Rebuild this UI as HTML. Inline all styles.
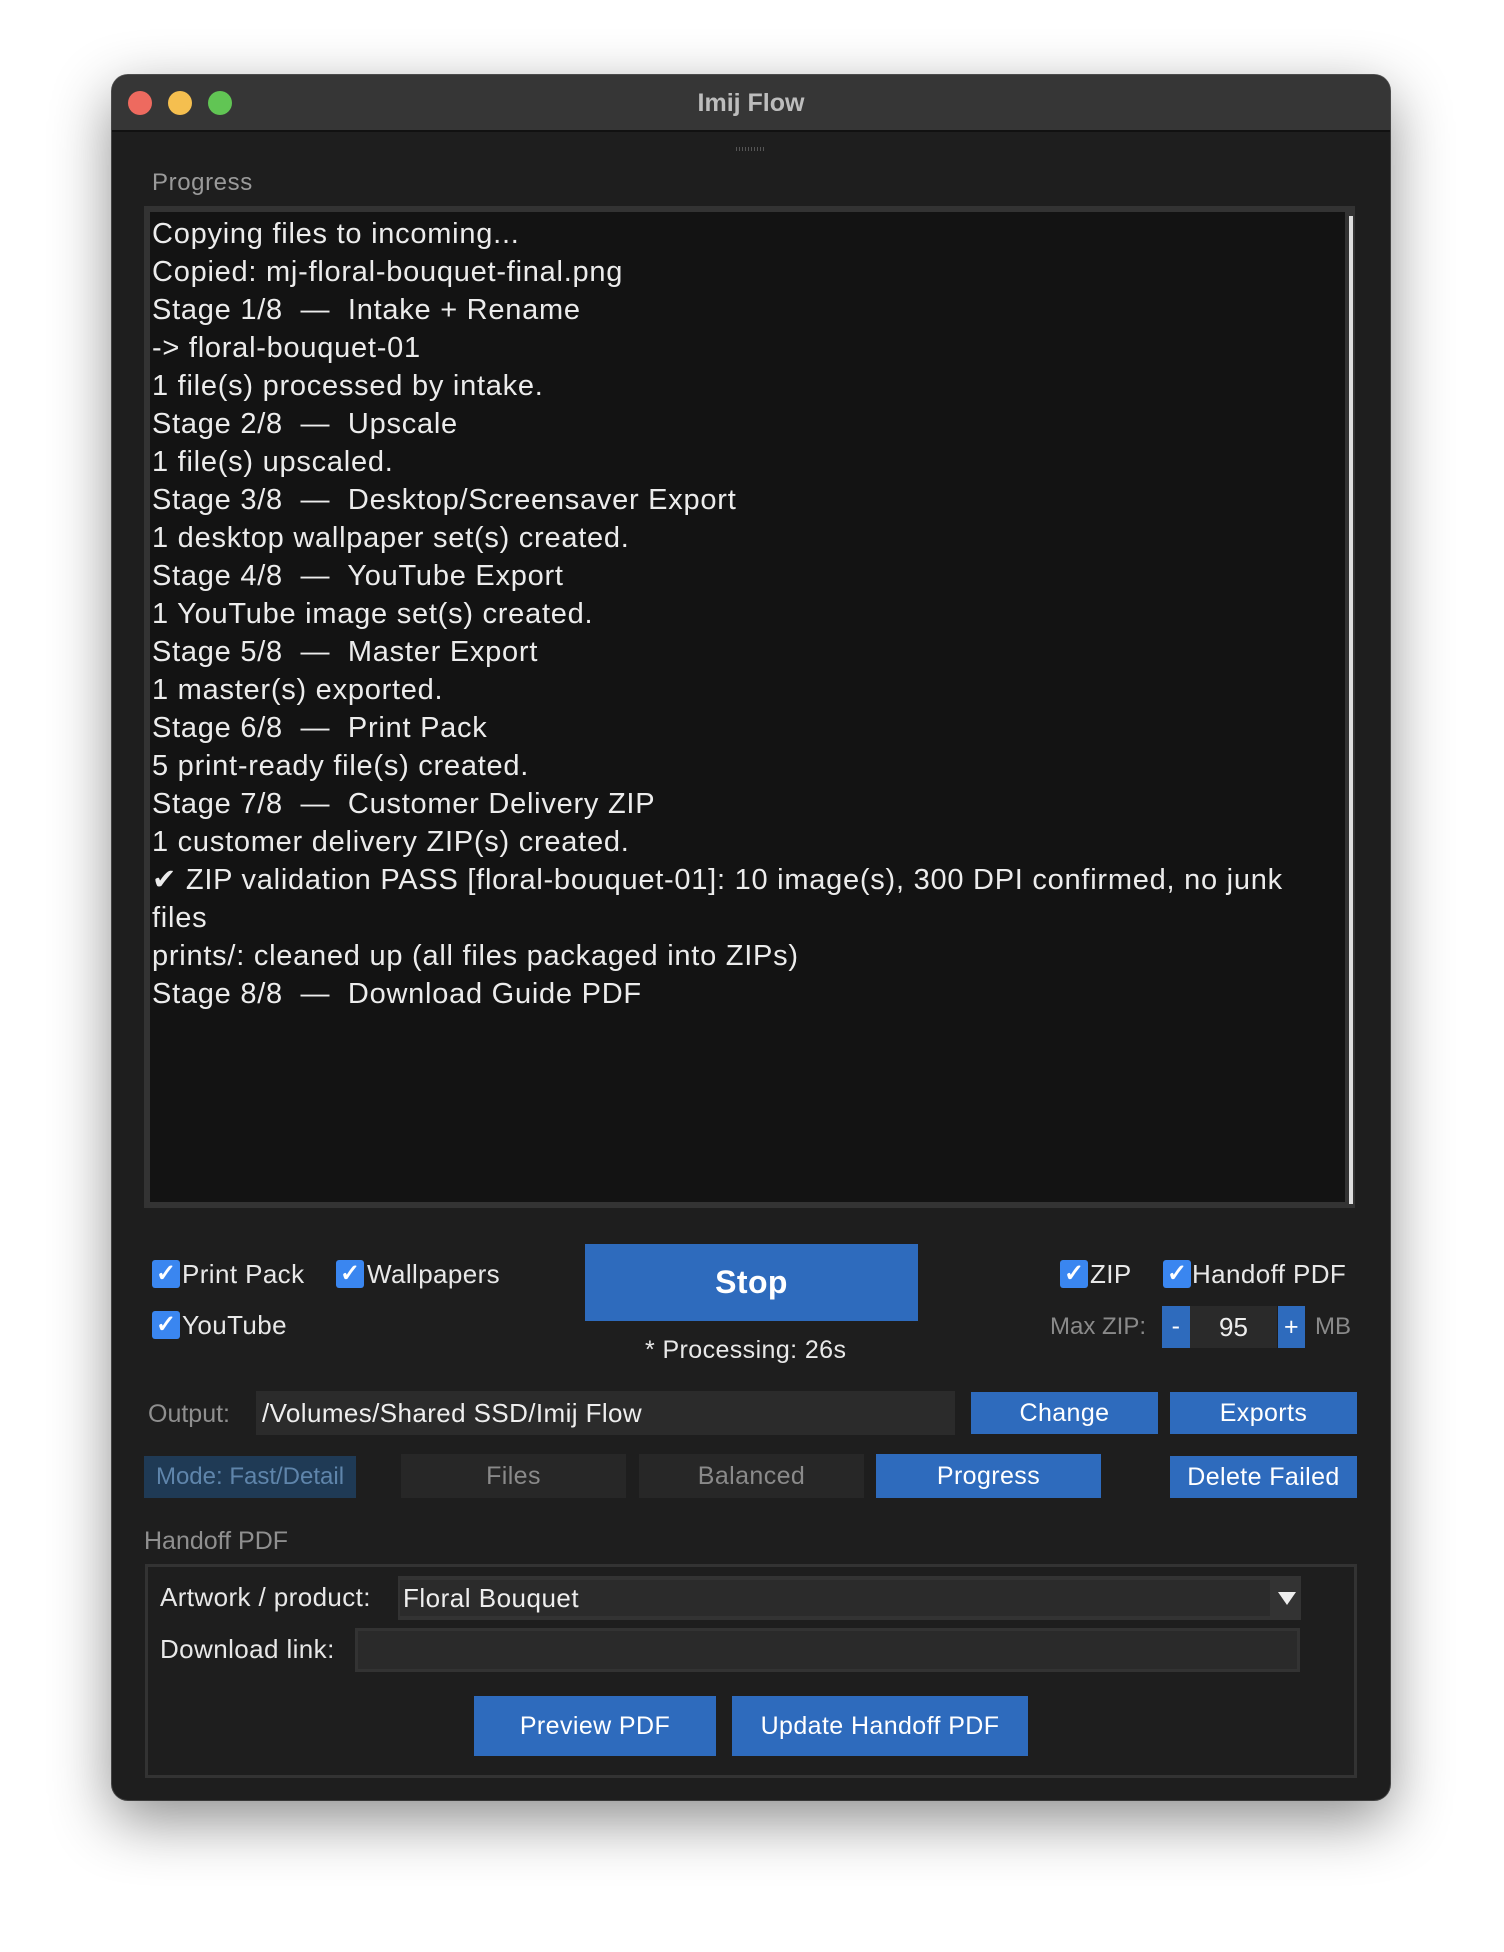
<!DOCTYPE html>
<html><head><meta charset="utf-8"><style>
*{margin:0;padding:0;box-sizing:border-box}
body{width:1504px;height:1952px;background:#fff;font-family:"Liberation Sans",sans-serif;position:relative;overflow:hidden}
.win{position:absolute;left:112px;top:75px;width:1278px;height:1725px;background:#1e1e1e;border-radius:16px;box-shadow:0 20px 60px rgba(0,0,0,.45),0 0 0 1px #555;overflow:hidden}
.tb{position:absolute;left:0;top:0;width:100%;height:57px;background:#363636;border-bottom:2px solid #111}
.tl{position:absolute;top:16px;width:24px;height:24px;border-radius:50%}
.title{position:absolute;left:0;width:100%;top:14px;text-align:center;color:#bdbdbd;font-weight:bold;font-size:25px}
.a{position:absolute}
.t{position:absolute;white-space:nowrap;line-height:1}
.log{position:absolute;left:144px;top:206px;width:1211px;height:1002px;background:#333}
.logi{position:absolute;left:6px;top:6px;right:10px;bottom:6px;background:#131313}
.lines{position:absolute;left:152px;top:215px;color:#ececec;font-size:29px;line-height:38px;white-space:nowrap;letter-spacing:0.75px}
.cb{position:absolute;width:28px;height:28px;background:#3a86f0;border-radius:3px;color:#fff;font-size:24px;font-weight:bold;text-align:center;line-height:28px}
.lbl{font-size:26px;color:#e8e8e8;letter-spacing:0.4px}
.btn{position:absolute;background:#2e6bbd;color:#fff;font-size:25px;text-align:center;letter-spacing:0.4px}
.gray{background:#272727;color:#8a8a8a}
</style></head><body>
<div class="win">
 <div class="tb">
  <div class="tl" style="left:16px;background:#ee6a5f"></div>
  <div class="tl" style="left:56px;background:#f5bf4f"></div>
  <div class="tl" style="left:96px;background:#61c554"></div>
  <div class="title">Imij Flow</div>
 </div>
</div>
<div class="a" style="left:736px;top:147px;width:30px;height:4px;background:repeating-linear-gradient(90deg,#555 0 1px,transparent 1px 3px)"></div>
<div class="t" style="left:152px;top:171px;font-size:24px;color:#9a9a9a;letter-spacing:0.6px">Progress</div>
<div class="log"><div class="logi"></div><div class="a" style="right:2px;top:10px;width:4px;bottom:4px;background:#ddd"></div></div>
<div class="lines">Copying files to incoming...<br>Copied: mj-floral-bouquet-final.png<br>Stage 1/8 &nbsp;—&nbsp; Intake + Rename<br>-&gt; floral-bouquet-01<br>1 file(s) processed by intake.<br>Stage 2/8 &nbsp;—&nbsp; Upscale<br>1 file(s) upscaled.<br>Stage 3/8 &nbsp;—&nbsp; Desktop/Screensaver Export<br>1 desktop wallpaper set(s) created.<br>Stage 4/8 &nbsp;—&nbsp; YouTube Export<br>1 YouTube image set(s) created.<br>Stage 5/8 &nbsp;—&nbsp; Master Export<br>1 master(s) exported.<br>Stage 6/8 &nbsp;—&nbsp; Print Pack<br>5 print-ready file(s) created.<br>Stage 7/8 &nbsp;—&nbsp; Customer Delivery ZIP<br>1 customer delivery ZIP(s) created.<br>✔ ZIP validation PASS [floral-bouquet-01]: 10 image(s), 300 DPI confirmed, no junk<br>files<br>prints/: cleaned up (all files packaged into ZIPs)<br>Stage 8/8 &nbsp;—&nbsp; Download Guide PDF</div>

<div class="cb" style="left:152px;top:1260px">✓</div><div class="t lbl" style="left:182px;top:1261px">Print Pack</div>
<div class="cb" style="left:336px;top:1260px">✓</div><div class="t lbl" style="left:367px;top:1261px">Wallpapers</div>
<div class="cb" style="left:152px;top:1311px">✓</div><div class="t lbl" style="left:182px;top:1312px">YouTube</div>
<div class="btn" style="left:585px;top:1244px;width:333px;height:77px;line-height:77px;font-size:32px;font-weight:bold">Stop</div>
<div class="t lbl" style="left:645px;top:1338px;font-size:25px">* Processing: 26s</div>
<div class="cb" style="left:1060px;top:1260px">✓</div><div class="t lbl" style="left:1090px;top:1261px">ZIP</div>
<div class="cb" style="left:1163px;top:1260px">✓</div><div class="t lbl" style="left:1192px;top:1261px">Handoff PDF</div>
<div class="t" style="left:1050px;top:1315px;font-size:24px;color:#8a8a8a">Max ZIP:</div>
<div class="btn" style="left:1162px;top:1306px;width:28px;height:42px;line-height:40px">-</div>
<div class="a" style="left:1190px;top:1306px;width:87px;height:42px;background:#2a2a2a;color:#eee;font-size:26px;text-align:center;line-height:42px">95</div>
<div class="btn" style="left:1278px;top:1306px;width:27px;height:42px;line-height:42px">+</div>
<div class="t" style="left:1315px;top:1315px;font-size:24px;color:#8a8a8a">MB</div>

<div class="t" style="left:148px;top:1402px;font-size:25px;color:#8f8f8f">Output:</div>
<div class="a" style="left:256px;top:1391px;width:699px;height:44px;background:#2b2b2b;color:#eee;font-size:26px;line-height:44px;padding-left:6px;letter-spacing:0.4px">/Volumes/Shared SSD/Imij Flow</div>
<div class="btn" style="left:971px;top:1392px;width:187px;height:42px;line-height:42px">Change</div>
<div class="btn" style="left:1170px;top:1392px;width:187px;height:42px;line-height:42px">Exports</div>

<div class="btn" style="left:144px;top:1456px;width:212px;height:42px;line-height:42px;background:#1f3a55;color:#5f85ab;font-size:24px;letter-spacing:0">Mode: Fast/Detail</div>
<div class="btn gray" style="left:401px;top:1454px;width:225px;height:44px;line-height:44px">Files</div>
<div class="btn gray" style="left:639px;top:1454px;width:225px;height:44px;line-height:44px">Balanced</div>
<div class="btn" style="left:876px;top:1454px;width:225px;height:44px;line-height:44px">Progress</div>
<div class="btn" style="left:1170px;top:1456px;width:187px;height:42px;line-height:42px">Delete Failed</div>

<div class="t" style="left:144px;top:1529px;font-size:25px;color:#8f8f8f">Handoff PDF</div>
<div class="a" style="left:145px;top:1564px;width:1212px;height:214px;border:3px solid #333"></div>
<div class="t lbl" style="left:160px;top:1584px">Artwork / product:</div>
<div class="a" style="left:398px;top:1576px;width:903px;height:44px;background:#333"><div class="a" style="left:2px;top:4px;width:870px;height:36px;background:#2b2b2b;color:#eee;font-size:26px;line-height:36px;padding-left:3px;letter-spacing:0.5px">Floral Bouquet</div><div class="a" style="left:880px;top:16px;width:0;height:0;border-left:9px solid transparent;border-right:9px solid transparent;border-top:13px solid #eee"></div></div>
<div class="t lbl" style="left:160px;top:1636px">Download link:</div>
<div class="a" style="left:355px;top:1628px;width:945px;height:44px;background:#2a2a2a;border:3px solid #333"></div>
<div class="btn" style="left:474px;top:1696px;width:242px;height:60px;line-height:60px">Preview PDF</div>
<div class="btn" style="left:732px;top:1696px;width:296px;height:60px;line-height:60px">Update Handoff PDF</div>
</body></html>
